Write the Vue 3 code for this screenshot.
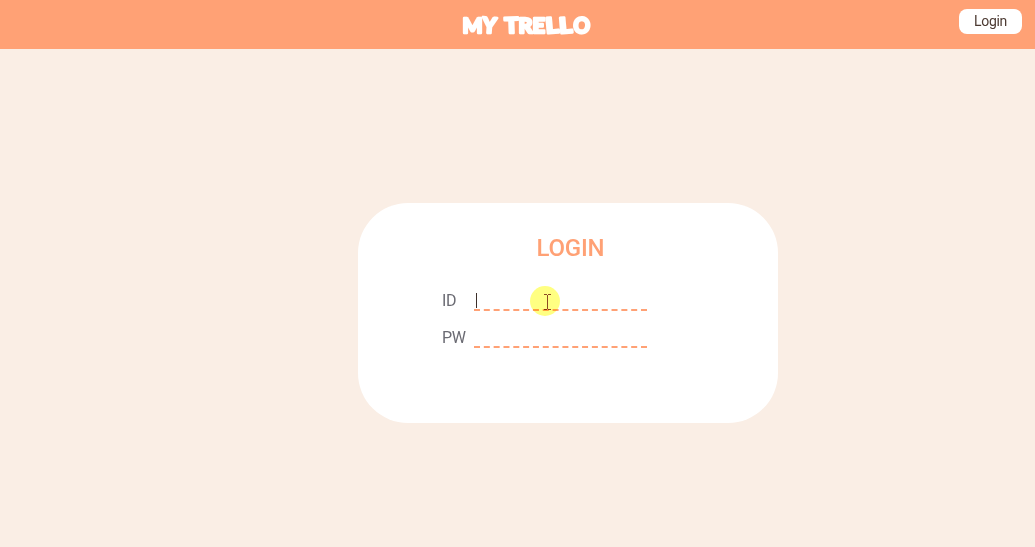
<script setup>
const letters = [
  { c: 'M', x: 462.5, w: 20, r: 0 },
  { c: 'Y', x: 482.5, w: 14, r: 4 },
  { c: 'T', x: 504.5, w: 14, r: -2 },
  { c: 'R', x: 518.5, w: 14, r: 0 },
  { c: 'E', x: 532.5, w: 12.5, r: 0 },
  { c: 'L', x: 545.5, w: 13, r: -5 },
  { c: 'L', x: 559, w: 13, r: -5 },
  { c: 'O', x: 573.5, w: 16.5, r: 4 },
]
const fields = [
  { id: 'user', label: 'ID', active: true },
  { id: 'pass', label: 'PW', active: false },
]
</script>

<template>
  <div class="page">
    <header class="bar">
      <svg class="brand" width="140" height="49" viewBox="456 0 140 49">
        <text
          v-for="(l, i) in letters"
          :key="i"
          :x="l.x"
          y="33"
          :textLength="l.w"
          lengthAdjust="spacingAndGlyphs"
          :transform="`rotate(${l.r} ${l.x + l.w / 2} 25)`"
        >{{ l.c }}</text>
      </svg>
      <button class="login">Login</button>
    </header>
    <main class="content">
      <section class="card">
        <h1>LOGIN</h1>
        <div v-for="f in fields" :key="f.id" class="row">
          <label>{{ f.label }}</label>
          <div class="field">
            <span v-if="f.active" class="caret"></span>
          </div>
        </div>
        <div class="pointer">
          <svg width="30" height="30" viewBox="0 0 30 30">
            <path d="M14 8.5h3M18 8.5h3M17.5 9v14M14 23.5h3M18 23.5h3" fill="none" stroke="#8b4a24" stroke-width="1" />
          </svg>
        </div>
      </section>
    </main>
  </div>
</template>

<style>
body { margin: 0; overflow: hidden; }
</style>

<style scoped>
.page {
  height: 547px;
  display: flex;
  flex-direction: column;
  background: #faeee5;
  font-family: Roboto, "Liberation Sans", sans-serif;
}
.bar {
  height: 49px;
  flex: none;
  display: flex;
  align-items: flex-start;
  justify-content: space-between;
  background: #ffa175;
  padding-right: 13px;
}
.brand { margin-left: 456px; }
.brand text {
  font-family: Lato, sans-serif;
  font-weight: 900;
  font-size: 21.5px;
  fill: #fff;
  stroke: #fff;
  stroke-width: 2.5px;
  stroke-linejoin: round;
}
.login {
  width: 63px;
  height: 25px;
  margin-top: 9px;
  padding: 0 0 1px;
  border: 0;
  border-radius: 8px;
  background: #fff;
  color: #4c3a32;
  font: 14px Roboto, sans-serif;
  letter-spacing: -0.3px;
}
.content { flex: 1; display: flex; align-items: flex-start; }
.card {
  position: relative;
  box-sizing: border-box;
  width: 420px;
  height: 220px;
  margin: 154px 0 0 358px;
  padding: 31px 84px 0;
  border-radius: 50px;
  background: #fff;
}
h1 {
  margin: 0 0 27px 5px;
  text-align: center;
  font-size: 24px;
  line-height: 28px;
  font-weight: 500;
  letter-spacing: -0.2px;
  color: #ffa175;
}
.row { display: flex; height: 22px; margin-bottom: 15px; }
label {
  width: 32px;
  font-size: 16px;
  line-height: 24px;
  letter-spacing: -0.3px;
  color: #6b6b73;
}
.field {
  box-sizing: border-box;
  width: 173px;
  height: 22px;
  border-bottom: 2px dashed #ffa175;
}
.caret {
  display: block;
  width: 1px;
  height: 15px;
  margin: 4px 0 0 2px;
  background: #3c2f2a;
}
.pointer {
  position: absolute;
  left: 172px;
  top: 83px;
  width: 30px;
  height: 30px;
  border-radius: 50%;
  background: #ffff82;
  mix-blend-mode: multiply;
}
.pointer svg { display: block; }
</style>
